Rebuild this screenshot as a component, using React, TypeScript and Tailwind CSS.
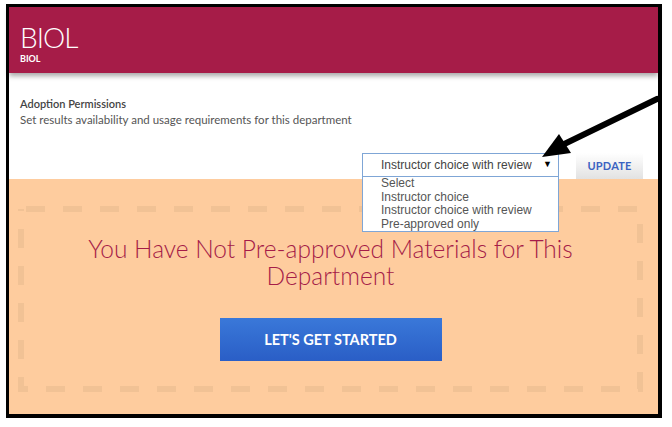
import React from 'react';

const OPTIONS = ['Select', 'Instructor choice', 'Instructor choice with review', 'Pre-approved only'];

export default function App() {
  return (
    <div className="relative w-[672px] h-[427px] bg-white pl-[6px] pt-[4px] font-['Lato',sans-serif]">
      <div className="w-[656px] h-[414px] border-l-[3px] border-t-[3px] border-r-4 border-b-4 border-black flex flex-col">
        {/* Department header */}
        <header className="relative z-10 h-[66px] shrink-0 bg-[#a61c48] text-white pl-[11px] pt-[16px] shadow-[0_3px_5px_rgba(0,0,0,0.35)]">
          <div className="text-[28px] font-light leading-[28px] tracking-[-1px]">BIOL</div>
          <div className="text-[9px] font-bold leading-[10px] mt-[3px]">BIOL</div>
        </header>

        {/* Permissions */}
        <section className="h-[106px] shrink-0 bg-white pl-[11px] pt-[23px]">
          <div className="text-[11px] leading-[16px] font-semibold text-[#444]">Adoption Permissions</div>
          <div className="text-[11.5px] leading-[16px] text-[#555]">Set results availability and usage requirements for this department</div>
          <div className="flex justify-end items-start gap-[17px] pr-[15px] mt-[25px]">
            <div className="relative w-[197px] h-[24px] border border-[#7fa6d6] bg-white flex items-center pl-[18px] pr-[6px] font-['Liberation_Sans',sans-serif] text-[12px] text-[#444]">
              <span className="flex-1">Instructor choice with review</span>
              <span className="text-[9px] text-black">▼</span>
              <ul className="absolute z-30 left-[-1px] top-full w-[197px] border border-[#7fa6d6] bg-white pl-[18px] text-[12px] leading-[13.5px] text-[#555]">
                {OPTIONS.map(o => (
                  <li key={o}>{o}</li>
                ))}
              </ul>
            </div>
            <button className="w-[67px] h-[26px] bg-gradient-to-b from-white to-[#e2e2e2] text-[11px] font-bold text-[#3a63c2] tracking-[0.2px]">
              UPDATE
            </button>
          </div>
        </section>

        {/* Empty state */}
        <div className="flex-1 bg-[#fecc9e] pl-[9px] pr-[15px] pt-[27px] pb-[22px]">
          <div className="relative h-full p-[6px] flex flex-col items-center">
            <svg className="absolute inset-0" width="625" height="186" viewBox="0 0 625 186">
              <rect x="3" y="3" width="619" height="180" fill="none" stroke="#f1c295" strokeWidth="6" strokeDasharray="19 18" strokeDashoffset="-5" />
            </svg>
            <h2 className="relative mt-[23px] text-[24.5px] leading-[27px] font-light text-[#a51c48] text-center">
              <span className="block">You Have Not Pre-approved Materials for This</span>
              <span className="block">Department</span>
            </h2>
            <button className="relative mt-[29px] w-[222px] h-[43px] bg-gradient-to-b from-[#3a78d9] to-[#2a5ec6] text-white text-[14.5px] font-bold">
              LET'S GET STARTED
            </button>
          </div>
        </div>
      </div>

      {/* annotation arrow */}
      <svg className="absolute left-0 top-0 pointer-events-none" width="672" height="427" viewBox="0 0 672 427">
        <line x1="657" y1="99" x2="556" y2="148" stroke="black" strokeWidth="6" strokeLinecap="round" />
        <polygon points="542,157 559,134 571,153" fill="black" />
      </svg>
    </div>
  );
}
